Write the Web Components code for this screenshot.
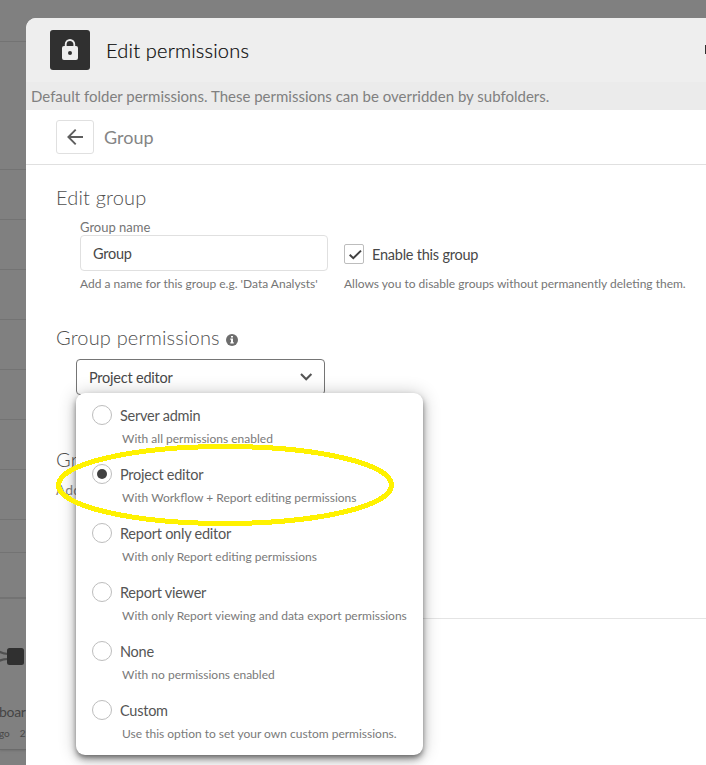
<!DOCTYPE html>
<html lang="en">
<head>
<meta charset="utf-8">
<title>Edit permissions</title>
<style>
html, body { margin: 0; height: 765px; overflow: hidden; }
body { font-family: Lato, "Open Sans", sans-serif; background: #808080; color: #414141; }
</style>
</head>
<body>
<permissions-page></permissions-page>
<script>
function define(name, html) {
  const template = document.createElement('template');
  template.innerHTML = html;
  customElements.define(name, class extends HTMLElement {
    constructor() {
      super();
      this.attachShadow({ mode: 'open' }).append(template.content.cloneNode(true));
    }
  });
}

define('dimmed-list', `
<style>
:host { display: flex; flex-direction: column; width: 26px; height: 765px; overflow: hidden; background: #808080; }
i { display: block; box-sizing: border-box; flex: none; border-bottom: 1px solid #737373; }
.card { flex: none; height: 150px; border-bottom: 1px solid #6b6b6b; box-shadow: 0 1px 2px #707070; display: flex; flex-direction: column; white-space: nowrap; }
svg { display: block; margin-top: 45px; flex: none; }
.name { font-size: 14px; line-height: 20px; letter-spacing: -0.3px; margin-top: 34px; margin-left: -1px; color: #454545; }
.meta { font-size: 10px; line-height: 14px; margin-top: 4px; margin-left: -1px; color: #484848; display: flex; gap: 10px; }
</style>
<i style="height:42px"></i><i style="height:128px"></i>
<i style="height:50px"></i><i style="height:50px"></i><i style="height:50px"></i><i style="height:50px"></i><i style="height:50px"></i><i style="height:50px"></i><i style="height:50px"></i>
<i style="height:33px"></i><i style="height:46px;border-bottom:2px solid #747474"></i>
<div class="card">
  <svg width="26" height="24" viewBox="0 644 26 24"><path d="M-1 651.5Q3 654 8 654M-1 661Q3 659 8 659" fill="none" stroke="#505050" stroke-width="2.2"/><rect x="7" y="648" width="17" height="17" rx="2.5" fill="#303030"/></svg>
  <div class="name">boar</div>
  <div class="meta"><span>go</span><span>2</span></div>
</div>
<i style="height:16px;border-color:#777"></i>`);

define('modal-header', `
<style>
:host { display: flex; align-items: center; justify-content: space-between; height: 64px; padding-left: 24px; background: #eee; }
.left { display: flex; align-items: center; gap: 16px; }
.badge { width: 40px; height: 40px; border-radius: 3px; background: #303030; display: block; }
svg { display: block; }
.t { font-size: 20px; font-weight: 300; line-height: 24px; letter-spacing: 0.19px; color: #000; -webkit-text-stroke: 0.2px #202020; }
.edge { width: 1px; height: 9px; background: #303030; margin-bottom: 2px; }
</style>
<div class="left"><div class="badge"><svg width="40" height="40" viewBox="0 0 40 40"><path d="M15.7 17V14.3a4.3 4.3 0 0 1 8.6 0V17" fill="none" stroke="#eee" stroke-width="1.8"/><path fill="#eee" fill-rule="evenodd" d="M14 16h12a2 2 0 0 1 2 2v10a2 2 0 0 1-2 2H14a2 2 0 0 1-2-2V18a2 2 0 0 1 2-2Zm6 5a2 2 0 1 0 0 4 2 2 0 0 0 0-4Z"/></svg></div><div class="t"><slot></slot></div></div>
<div class="edge"></div>`);

define('modal-notice', `
<style>:host { display: block; box-sizing: border-box; height: 28px; padding-left: 5px; font-size: 15px; line-height: 28px; color: #808080; background: #ebebeb; white-space: nowrap; }</style><slot></slot>`);

define('back-bar', `
<style>
:host { display: flex; align-items: center; gap: 10px; height: 54px; padding-left: 30px; border-bottom: 1px solid #e0e0e0; color: #858585; font-size: 18px; line-height: 22px; }
.b { box-sizing: border-box; width: 38px; height: 34px; border: 1px solid #e0e0e0; border-radius: 3px; }
svg { display: block; }
</style>
<div class="b"><svg width="36" height="32" viewBox="0 0 36 32"><path d="M26 16H11.8M18.7 8.7 11.4 16l7.3 7.3" fill="none" stroke="#5e5e5e" stroke-width="1.9"/></svg></div><slot></slot>`);

define('section-heading', `<style>:host { display: flex; align-items: center; gap: 6.5px; height: 24px; font-size: 20px; font-weight: 300; letter-spacing: 0.17px; line-height: 24px; color: #505050; white-space: nowrap; }</style><slot></slot>`);

define('info-icon', `<style>:host { display: block; height: 12px; margin-top: 6px; } svg { display: block; }</style>
<svg width="12" height="12" viewBox="0 0 12 12"><circle cx="6" cy="6" r="6" fill="#6d6d6d"/><path fill="#fff" d="M5 2h2v1.6H5zM4.3 4.6H7v3.6h.8v1.2H4.3V8.2H5V5.8h-.7z"/></svg>`);

define('text-field', `
<style>
:host { display: flex; flex-direction: column; width: 248px; }
.l { font-size: 13px; line-height: 16px; color: #757575; }
.in { box-sizing: border-box; height: 36px; border: 1px solid #e0e0e0; border-radius: 4px; padding-left: 12px; font-size: 14.5px; letter-spacing: -0.25px; line-height: 35px; color: #484848; }
.h { margin-top: 5px; font-size: 12px; line-height: 16px; color: #757575; white-space: nowrap; }
</style>
<div class="l"><slot name="label"></slot></div><div class="in"><slot></slot></div><div class="h"><slot name="hint"></slot></div>`);

define('check-field', `
<style>
:host { display: flex; flex-direction: column; padding-top: 25px; }
.r { display: flex; gap: 8px; align-items: center; height: 20px; font-size: 14.5px; letter-spacing: -0.23px; line-height: 20px; color: #484848; }
.c { box-sizing: border-box; width: 20px; height: 20px; border: 1px solid #bdbdbd; border-radius: 2px; }
.t { padding-top: 1px; }
svg { display: block; }
.h { margin-top: 12px; font-size: 12px; line-height: 16px; color: #757575; white-space: nowrap; }
</style>
<div class="r"><div class="c"><svg width="18" height="18" viewBox="0 0 18 18"><path d="M4.7 9.7 8.3 13.2 16 5.6" fill="none" stroke="#414141" stroke-width="2"/></svg></div><div class="t"><slot></slot></div></div><div class="h"><slot name="hint"></slot></div>`);

define('select-box', `
<style>
:host { box-sizing: border-box; display: flex; justify-content: space-between; align-items: center; width: 249px; height: 36px; border: 1px solid #757575; border-radius: 4px; padding: 0 11px 0 12px; font-size: 14.5px; letter-spacing: -0.22px; line-height: 20px; color: #484848; }
.t { padding-top: 2px; }
svg { display: block; }
</style>
<div class="t"><slot></slot></div><svg width="13" height="10" viewBox="0 0 13 10"><path d="M1 2 6.2 7.2 11.4 2" fill="none" stroke="#555" stroke-width="2.1"/></svg>`);

define('option-menu', `<style>:host { box-sizing: border-box; display: flex; flex-direction: column; width: 347px; height: 362px; padding: 12px 0 0 16px; background: #fff; border-radius: 9px; box-shadow: 0 3px 5px -1px rgba(0,0,0,.4), 0 1px 18px 0 rgba(0,0,0,.24), 0 5px 9px rgba(0,0,0,.26); }</style><slot></slot>`);

define('radio-option', `
<style>
:host { display: grid; grid-template-columns: 20px 1fr; column-gap: 8px; grid-template-rows: 20px 39px; height: 59px; }
.o { box-sizing: border-box; width: 20px; height: 20px; border: 1px solid #bdbdbd; border-radius: 50%; display: grid; place-items: center; }
:host([checked]) .o::after { content: ""; width: 10px; height: 10px; border-radius: 50%; background: #414141; }
.t { font-size: 14.5px; letter-spacing: -0.24px; line-height: 20px; padding-top: 1px; color: #555; }
.h { grid-column: 2; font-size: 12px; line-height: 16px; padding: 6px 0 0 2px; color: #7a7a7a; white-space: nowrap; }
</style>
<div class="o"></div><div class="t"><slot></slot></div><div class="h"><slot name="hint"></slot></div>`);

define('highlight-ring', `<style>:host { display: block; } svg { display: block; }</style>
<svg width="338" height="82" viewBox="0 0 338 82"><ellipse cx="169" cy="41" rx="166.5" ry="38.5" fill="none" stroke="#fff200" stroke-width="5" shape-rendering="crispEdges"/></svg>`);

define('permissions-page', `
<style>
:host { position: relative; display: flex; width: 706px; height: 765px; overflow: hidden; background: #808080; }
.modal { box-sizing: border-box; flex: 1; margin-top: 18px; background: #fff; border-radius: 10px 0 0 0; overflow: hidden; display: flex; flex-direction: column; }
.body { display: flex; flex-direction: column; padding: 20px 0 0 30px; }
.fields { display: flex; gap: 16px; padding: 10px 0 0 24px; height: 73px; }
.perm { margin-top: 33px; }
select-box { margin: 10px 0 0 20px; }
.next { margin-top: 52px; }
.sub { margin-top: 10px; font-size: 14px; line-height: 18px; color: #858585; }
.rule { margin-top: 119px; border-top: 1px solid #e4e4e4; margin-left: 20px; }
option-menu { position: absolute; left: 76px; top: 393px; }
highlight-ring { position: absolute; left: 56px; top: 444px; }
</style>
<dimmed-list></dimmed-list>
<div class="modal">
  <modal-header>Edit permissions</modal-header>
  <modal-notice>Default folder permissions. These permissions can be overridden by subfolders.</modal-notice>
  <back-bar>Group</back-bar>
  <div class="body">
    <section-heading>Edit group</section-heading>
    <div class="fields">
      <text-field><span slot="label">Group name</span>Group<span slot="hint">Add a name for this group e.g. 'Data Analysts'</span></text-field>
      <check-field>Enable this group<span slot="hint">Allows you to disable groups without permanently deleting them.</span></check-field>
    </div>
    <section-heading class="perm">Group permissions<info-icon></info-icon></section-heading>
    <select-box>Project editor</select-box>
    <section-heading class="next">Gr</section-heading>
    <div class="sub">Add</div>
    <div class="rule"></div>
  </div>
</div>
<option-menu>
  <radio-option>Server admin<span slot="hint">With all permissions enabled</span></radio-option>
  <radio-option checked>Project editor<span slot="hint">With Workflow + Report editing permissions</span></radio-option>
  <radio-option>Report only editor<span slot="hint">With only Report editing permissions</span></radio-option>
  <radio-option>Report viewer<span slot="hint">With only Report viewing and data export permissions</span></radio-option>
  <radio-option>None<span slot="hint">With no permissions enabled</span></radio-option>
  <radio-option>Custom<span slot="hint">Use this option to set your own custom permissions.</span></radio-option>
</option-menu>
<highlight-ring></highlight-ring>`);
</script>
</body>
</html>
